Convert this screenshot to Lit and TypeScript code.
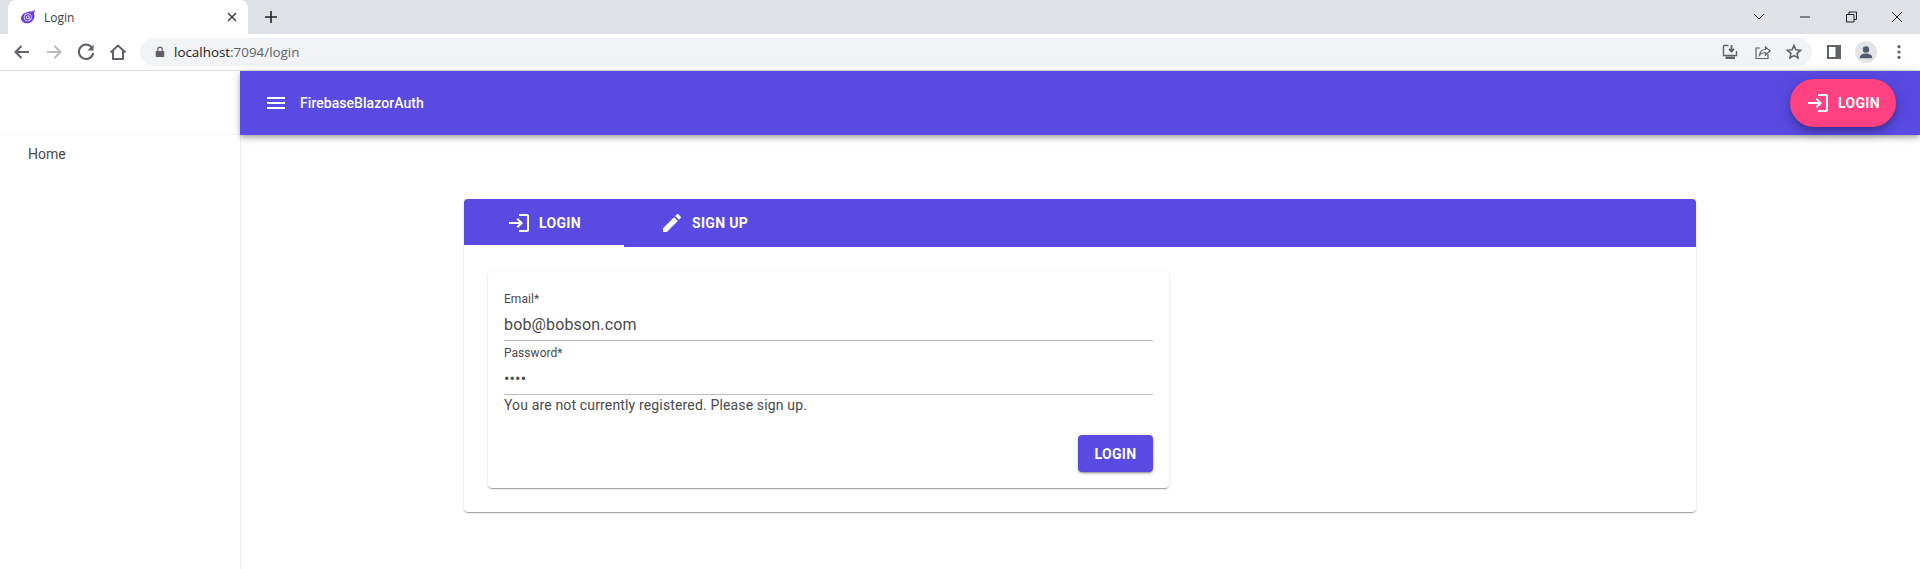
import { LitElement, html, css, svg } from "lit";
import { customElement } from "lit/decorators.js";

const LOGIN = svg`<path d="M11 7L9.6 8.4l2.6 2.6H2v2h10.2l-2.6 2.6L11 17l5-5-5-5zm9 12h-8v2h8c1.1 0 2-.9 2-2V5c0-1.1-.9-2-2-2h-8v2h8v14z"/>`;
const EDIT = svg`<path d="M3 17.25V21h3.75L17.81 9.94l-3.75-3.75L3 17.25zM20.71 7.04c.39-.39.39-1.02 0-1.41l-2.34-2.34c-.39-.39-1.02-.39-1.41 0l-1.83 1.83 3.75 3.75 1.83-1.83z"/>`;
const MENU = svg`<path d="M3 18h18v-2H3v2zm0-5h18v-2H3v2zm0-7v2h18V6H3z"/>`;

const icon = (p: unknown, cls = "mi") => html`<svg class=${cls} viewBox="0 0 24 24" fill="currentColor">${p}</svg>`;

@customElement("app-root")
export class AppRoot extends LitElement {
  static styles = css`
    :host { display: block; width: 1920px; height: 569px; overflow: hidden; background: #fff; font-family: Roboto, "Liberation Sans", sans-serif; color: #424242; }
    .page { display: flex; flex-direction: column; height: 569px; }

    .strip { height: 34px; background: #dee1e6; display: flex; align-items: flex-end; flex: none; padding-left: 8px; }
    .tab { width: 240px; height: 34px; background: #fff; border-radius: 8px 8px 0 0; display: flex; align-items: center; box-sizing: border-box; padding-left: 12px; padding-right: 10px; gap: 8px; font: 12px "Open Sans", sans-serif; color: #3c4043; }
    .tab .fav { width: 16px; height: 16px; flex: none; }
    .tab .label { flex: 1; }
    .tab .x { width: 12px; height: 12px; flex: none; }
    .plus { width: 14px; height: 14px; margin: 0 0 10px 16px; flex: none; }
    .spacer { flex: 1; }
    .win { display: flex; align-items: center; height: 34px; align-self: flex-start; }
    .win svg { width: 46px; height: 28px; display: block; }

    .toolbar { height: 36px; flex: none; display: flex; align-items: center; background: #fff; border-bottom: 1px solid #dadce0; box-sizing: content-box; }
    .nav { display: flex; align-items: center; padding-left: 8px; gap: 4px; width: 140px; box-sizing: border-box; flex: none; }
    .nav svg { width: 28px; height: 28px; display: block; }
    .omni { width: 1672px; height: 28px; background: #f1f3f4; border-radius: 14px; display: flex; align-items: center; box-sizing: border-box; padding: 0 4px 0 14px; flex: none; }
    .omni .lock { width: 12px; height: 12px; margin-right: 8px; flex: none; margin-left: 0; }
    .url { font: 13.4px "Open Sans", sans-serif; color: #202124; flex: 1; letter-spacing: 0; }
    .url span { color: #5f6368; }
    .omni svg.oi { width: 28px; height: 28px; margin-left: 4px; flex: none; display: block; }
    .tools { flex: 1; display: flex; align-items: center; padding-left: 8px; gap: 4px; }
    .tools svg { width: 28px; height: 28px; display: block; flex: none; }
    .tools svg.dots { margin-left: 1px; }

    .body { flex: 1; display: flex; min-height: 0; }
    .side { width: 241px; flex: none; border-right: 1px solid #eeeeee; box-sizing: border-box; }
    .side-head { height: 64px; border-bottom: 1px solid #f4f4f4; box-sizing: border-box; }
    .side-item { padding: 0 28px; height: 38px; line-height: 38px; font-size: 14px; color: #4a4a4a; }
    .main { flex: 1; min-width: 0; display: flex; flex-direction: column; margin-left: -1px; }
    .appbar { height: 64px; flex: none; background: #594ae2; color: #fff; display: flex; align-items: center; padding: 0 24px 0 24px; box-shadow: 0 2px 4px -1px rgba(0,0,0,.2), 0 4px 5px 0 rgba(0,0,0,.14), 0 1px 10px 0 rgba(0,0,0,.12); position: relative; z-index: 2; }
    .appbar .menu { width: 24px; height: 24px; margin-right: 12px; flex: none; }
    .appbar .title { font-size: 14px; font-weight: 500; flex: 1; letter-spacing: .05px; }
    .cta { width: 106px; height: 48px; border-radius: 24px; background: #ff4081; color: #fff; display: flex; align-items: center; justify-content: center; gap: 8px; font-size: 14px; font-weight: 700; letter-spacing: .3px; box-shadow: 0 3px 5px -1px rgba(0,0,0,.2), 0 6px 10px 0 rgba(0,0,0,.14), 0 1px 18px 0 rgba(0,0,0,.12); }
    .mi { width: 24px; height: 24px; flex: none; display: block; }

    .content { flex: 1; padding-top: 64px; }
    .outer { width: 1232px; margin: 0 auto; border-radius: 4px; background: #fff; box-shadow: 0 2px 1px -1px rgba(0,0,0,.2), 0 1px 1px 0 rgba(0,0,0,.14), 0 1px 3px 0 rgba(0,0,0,.12); }
    .tabs { height: 48px; background: #594ae2; border-radius: 4px 4px 0 0; display: flex; color: #fff; }
    .t { width: 160px; height: 48px; box-sizing: border-box; display: flex; align-items: center; justify-content: center; gap: 8px; font-size: 14px; font-weight: 700; letter-spacing: .3px; }
    .t.active { border-bottom: 2px solid #fff; padding-top: 2px; }
    .panel { padding: 24px; }
    .inner { width: 681px; box-sizing: border-box; padding: 16px; border-radius: 4px; background: #fff; box-shadow: 0 2px 1px -1px rgba(0,0,0,.2), 0 1px 1px 0 rgba(0,0,0,.14), 0 1px 3px 0 rgba(0,0,0,.12); }
    .field { border-bottom: 1px solid #bdbdbd; }
    .flabel { font-size: 12px; line-height: 16px; color: #4a4a4a; padding-top: 4px; height: 16px; letter-spacing: .04px; }
    .flabel i { font-style: normal; color: #4a4a4a; }
    .fval { font-size: 16px; line-height: 24px; height: 33px; padding-top: 6px; box-sizing: border-box; letter-spacing: .15px; color: #4a4a4a; }
    .msg { font-size: 14px; line-height: 20px; color: #4a4a4a; letter-spacing: .15px; height: 20px; }
    .acts { display: flex; justify-content: flex-end; padding-top: 20px; }
    .btn { width: 75px; height: 37px; background: #594ae2; color: #fff; border-radius: 4px; display: flex; align-items: center; justify-content: center; font-size: 14px; font-weight: 700; letter-spacing: .3px; box-shadow: 0 3px 1px -2px rgba(0,0,0,.2), 0 2px 2px 0 rgba(0,0,0,.14), 0 1px 5px 0 rgba(0,0,0,.12); }
  `;

  render() {
    return html`<div class="page">
      <div class="strip">
        <div class="tab">
          <svg class="fav" viewBox="0 0 16 16">
            <path d="M6.500 3.200c2.200-.9 4.200-.6 5.800-1 1-.3 2-.7 3-1.200-.3 1.300-.9 2.300-1.600 3.100.6 1.100.9 2.300.7 3.600-.4 3.400-3.400 6.600-7 6.600-3.400 0-6.400-1.900-6.400-5 0-2.800 2.300-5.200 5.500-6.100z" fill="#6a3ee6"/>
            <circle cx="7.800" cy="8.300" r="3.700" fill="none" stroke="#e9e4fb" stroke-width=".9"/>
            <circle cx="7.800" cy="8.300" r="1.500" fill="none" stroke="#e9e4fb" stroke-width=".9"/>
            <path d="M9.300 8.300v1.500c.8.400 1.500.2 1.900-.3" fill="none" stroke="#e9e4fb" stroke-width=".8"/>
          </svg>
          <span class="label">Login</span>
          <svg class="x" viewBox="0 0 12 12"><path d="M2 2l8 8M10 2l-8 8" stroke="#3c4043" stroke-width="1.500" fill="none"/></svg>
        </div>
        <svg class="plus" viewBox="0 0 14 14"><path d="M7 1v12M1 7h12" stroke="#202124" stroke-width="1.600" fill="none"/></svg>
        <div class="spacer"></div>
        <div class="win">
          <svg viewBox="0 0 46 28"><path d="M18 11l5 5 5-5" stroke="#202124" fill="none"/></svg>
          <svg viewBox="0 0 46 28"><path d="M18 14h10" stroke="#202124" fill="none"/></svg>
          <svg viewBox="0 0 46 28"><path d="M18.500 11.500h7.500v7.500h-7.500zM21 11.500V9h7.500v7.500H26" stroke="#202124" fill="none"/></svg>
          <svg viewBox="0 0 46 28"><path d="M18 9l10 10M28 9L18 19" stroke="#202124" fill="none"/></svg>
        </div>
      </div>
      <div class="toolbar">
        <div class="nav">
          <svg viewBox="0 0 28 28"><path d="M21 14H8M13.500 8l-6 6 6 6" stroke="#5f6368" stroke-width="2" fill="none"/></svg>
          <svg viewBox="0 0 28 28"><path d="M7 14h13M14.500 8l6 6-6 6" stroke="#b8babd" stroke-width="2" fill="none"/></svg>
          <svg viewBox="0 0 28 28"><path d="M20.500 10.500A7.200 7.200 0 1 0 21.200 15" stroke="#5f6368" stroke-width="2" fill="none"/><path d="M21.500 6.500v6h-6z" fill="#5f6368"/></svg>
          <svg viewBox="0 0 28 28"><path d="M6.500 14.500L14 7.500l7.500 7M9 13v8h10v-8" stroke="#5f6368" stroke-width="2" fill="none"/></svg>
        </div>
        <div class="omni">
          <svg class="lock" viewBox="0 0 12 12"><path d="M2.500 5h7a.8.8 0 0 1 .8.8v4.400a.8.8 0 0 1-.8.8h-7a.8.8 0 0 1-.8-.8V5.800a.8.8 0 0 1 .8-.8z" fill="#5f6368"/><path d="M3.800 5V3.400a2.200 2.200 0 0 1 4.400 0V5" stroke="#5f6368" stroke-width="1.200" fill="none"/></svg>
          <div class="url">localhost<span>:7094/login</span></div>
          <svg class="oi" viewBox="0 0 28 28"><path d="M7.500 7.500h5M20.500 13v4.500h-13v-10" stroke="#5f6368" stroke-width="1.400" fill="none"/><path d="M15.500 7v6M13 11l2.500 2.500L18 11" stroke="#5f6368" stroke-width="1.800" fill="none"/><path d="M9.500 18.500h9.500v2.500H9.500z" fill="#5f6368"/></svg>
          <svg class="oi" viewBox="0 0 28 28"><path d="M12 10H8v10.500h12V16" stroke="#5f6368" stroke-width="1.200" fill="none"/><path d="M11.500 17c.5-3.500 3-5.500 6-5.500V9l4.500 4-4.500 4v-2.500c-2.500 0-4.500.8-6 2.500z" stroke="#5f6368" stroke-width="1.200" fill="none"/></svg>
          <svg class="oi" viewBox="0 0 28 28"><path d="M14 7.500l1.900 4.300 4.700.5-3.500 3.100 1 4.600-4.100-2.400-4.100 2.400 1-4.600-3.500-3.100 4.700-.5z" stroke="#5f6368" stroke-width="1.600" fill="none"/></svg>
        </div>
        <div class="tools">
          <svg viewBox="0 0 28 28"><path d="M8 8h12v12H8z" fill="#fff" stroke="#5f6368" stroke-width="2"/><path d="M15.500 7h5.500v14h-5.500z" fill="#5f6368"/></svg>
          <svg viewBox="0 0 28 28"><circle cx="14" cy="14" r="11" fill="#e3e5e9"/><circle cx="14" cy="11.500" r="3.200" fill="#4f5b6f"/><path d="M7.800 19.500c0-2.500 3-4 6.200-4s6.200 1.500 6.200 4v.8H7.800z" fill="#4f5b6f"/></svg>
          <svg class="dots" viewBox="0 0 28 28"><circle cx="14" cy="8.700" r="1.600" fill="#5f6368"/><circle cx="14" cy="14" r="1.600" fill="#5f6368"/><circle cx="14" cy="19.300" r="1.600" fill="#5f6368"/></svg>
        </div>
      </div>
      <div class="body">
        <aside class="side">
          <div class="side-head"></div>
          <div class="side-item">Home</div>
        </aside>
        <div class="main">
          <header class="appbar">
            ${icon(MENU, "menu")}
            <div class="title">FirebaseBlazorAuth</div>
            <div class="cta">${icon(LOGIN)}<span>LOGIN</span></div>
          </header>
          <div class="content">
            <div class="outer">
              <div class="tabs">
                <div class="t active">${icon(LOGIN)}<span>LOGIN</span></div>
                <div class="t">${icon(EDIT)}<span>SIGN UP</span></div>
              </div>
              <div class="panel">
                <div class="inner">
                  <div class="field">
                    <div class="flabel">Email<i>*</i></div>
                    <div class="fval">bob@bobson.com</div>
                  </div>
                  <div class="field">
                    <div class="flabel">Password<i>*</i></div>
                    <div class="fval">••••</div>
                  </div>
                  <div class="msg">You are not currently registered. Please sign up.</div>
                  <div class="acts"><div class="btn">LOGIN</div></div>
                </div>
              </div>
            </div>
          </div>
        </div>
      </div>
    </div>`;
  }
}
